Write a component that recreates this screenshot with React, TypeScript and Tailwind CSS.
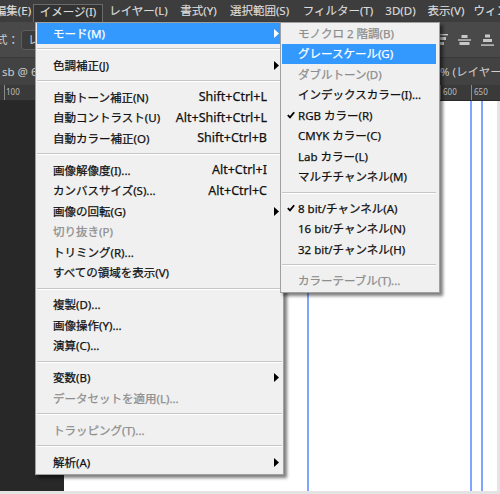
import React from 'react';

type Entry =
  | 'sep'
  | {
      label: string;
      shortcut?: string;
      sub?: boolean;
      disabled?: boolean;
      active?: boolean;
      checked?: boolean;
    };

const imageMenu: Entry[] = [
  { label: 'モード(M)', sub: true, active: true },
  'sep',
  { label: '色調補正(J)', sub: true },
  'sep',
  { label: '自動トーン補正(N)', shortcut: 'Shift+Ctrl+L' },
  { label: '自動コントラスト(U)', shortcut: 'Alt+Shift+Ctrl+L' },
  { label: '自動カラー補正(O)', shortcut: 'Shift+Ctrl+B' },
  'sep',
  { label: '画像解像度(I)...', shortcut: 'Alt+Ctrl+I' },
  { label: 'カンバスサイズ(S)...', shortcut: 'Alt+Ctrl+C' },
  { label: '画像の回転(G)', sub: true },
  { label: '切り抜き(P)', disabled: true },
  { label: 'トリミング(R)...' },
  { label: 'すべての領域を表示(V)' },
  'sep',
  { label: '複製(D)...' },
  { label: '画像操作(Y)...' },
  { label: '演算(C)...' },
  'sep',
  { label: '変数(B)', sub: true },
  { label: 'データセットを適用(L)...', disabled: true },
  'sep',
  { label: 'トラッピング(T)...', disabled: true },
  'sep',
  { label: '解析(A)', sub: true },
];

const modeMenu: Entry[] = [
  { label: 'モノクロ 2 階調(B)', disabled: true },
  { label: 'グレースケール(G)', active: true },
  { label: 'ダブルトーン(D)', disabled: true },
  { label: 'インデックスカラー(I)...' },
  { label: 'RGB カラー(R)', checked: true },
  { label: 'CMYK カラー(C)' },
  { label: 'Lab カラー(L)' },
  { label: 'マルチチャンネル(M)' },
  'sep',
  { label: '8 bit/チャンネル(A)', checked: true },
  { label: '16 bit/チャンネル(N)' },
  { label: '32 bit/チャンネル(H)' },
  'sep',
  { label: 'カラーテーブル(T)...', disabled: true },
];

const menuBar = [
  { label: '編集(E)', w: 'w-[40px]' },
  { label: 'イメージ(I)', w: 'w-[70px]', active: true },
  { label: 'レイヤー(L)', w: 'w-[71px]' },
  { label: '書式(Y)', w: 'w-[49px]' },
  { label: '選択範囲(S)', w: 'w-[73px]' },
  { label: 'フィルター(T)', w: 'w-[84px]' },
  { label: '3D(D)', w: 'w-[41px]' },
  { label: '表示(V)', w: 'w-[50px]' },
  { label: 'ウィンドウ(W)', w: 'w-[80px]' },
];

function Arrow({ white }: { white?: boolean }) {
  return (
    <svg width="5" height="9" viewBox="0 0 5 9" className="shrink-0">
      <polygon points="0,0 5,4.5 0,9" fill={white ? '#ffffff' : '#000000'} />
    </svg>
  );
}

function Check() {
  return (
    <svg width="8" height="8" viewBox="0 0 8 8" className="absolute left-[5px] top-1/2 -translate-y-1/2">
      <path d="M0.8 4.2 L3 6.4 L7.2 1.2" fill="none" stroke="#000" strokeWidth="1.8" />
    </svg>
  );
}

function Separator({ h }: { h: string }) {
  return (
    <div className={`${h} flex flex-col justify-center`}>
      <div className="h-px bg-[#c6c6c6]" />
      <div className="h-px bg-white" />
    </div>
  );
}

function MainMenu() {
  return (
    <div className="absolute left-[35px] top-[22px] z-10 w-[249px] border border-[#a0a0a0] bg-[#f0f0f0] px-px pb-px shadow-[3px_3px_3px_rgba(0,0,0,0.5)] [-webkit-text-stroke:0.25px]">
      {imageMenu.map((e, i) =>
        e === 'sep' ? (
          <Separator key={i} h="h-[11.5px]" />
        ) : (
          <div
            key={i}
            className={`flex h-[20.5px] items-center pl-[16px] pr-[3px] ${
              e.active ? 'bg-[#3399ff] text-white' : e.disabled ? 'text-[#8e8e8e]' : 'text-[#111]'
            }`}
          >
            <span className="flex-1 whitespace-nowrap">{e.label}</span>
            {e.shortcut && <span className="whitespace-nowrap text-[12.5px]">{e.shortcut}</span>}
            <span className="flex w-[12px] justify-end">{e.sub && <Arrow white={e.active} />}</span>
          </div>
        )
      )}
    </div>
  );
}

function ModeMenu() {
  return (
    <div className="absolute left-[280px] top-[22px] z-20 w-[160px] border border-[#a0a0a0] bg-[#f0f0f0] pb-px pl-px pr-[3px] shadow-[3px_3px_3px_rgba(0,0,0,0.5)] [-webkit-text-stroke:0.25px]">
      {modeMenu.map((e, i) =>
        e === 'sep' ? (
          <Separator key={i} h="h-[11px]" />
        ) : (
          <div
            key={i}
            className={`relative flex h-[20.5px] items-center pl-[16px] ${
              e.active ? 'bg-[#3399ff] text-white' : e.disabled ? 'text-[#8e8e8e]' : 'text-[#111]'
            }`}
          >
            {e.checked && <Check />}
            <span className="whitespace-nowrap">{e.label}</span>
          </div>
        )
      )}
    </div>
  );
}

function AlignIcon({ kind }: { kind: 'top' | 'mid' | 'bottom' }) {
  return (
    <svg width="13" height="12" viewBox="0 0 13 12" fill="#c8c8c8">
      {kind === 'top' && (
        <>
          <rect x="0" y="0" width="13" height="1.4" />
          <rect x="2" y="3" width="9" height="3" />
          <rect x="4" y="8" width="5" height="3" />
        </>
      )}
      {kind === 'mid' && (
        <>
          <rect x="3.5" y="1" width="6" height="3" />
          <rect x="0" y="5.3" width="13" height="1.4" />
          <rect x="1.5" y="8" width="10" height="3" />
        </>
      )}
      {kind === 'bottom' && (
        <>
          <rect x="4" y="0.5" width="5" height="3" />
          <rect x="2" y="5" width="9" height="3" />
          <rect x="0" y="10.4" width="13" height="1.4" />
        </>
      )}
    </svg>
  );
}

export default function App() {
  return (
    <div className="relative h-[494px] w-[500px] overflow-hidden bg-[#282828] font-['Noto_Sans','Noto_Sans_CJK_JP',sans-serif] text-[11.5px] leading-none">
      {/* menu bar */}
      <div className="flex h-[22px] items-end overflow-hidden bg-[#3d3d3d] text-[#dcdcdc] [-webkit-text-stroke:0.15px]">
        <div className="ml-[-7px] flex h-[18px] shrink-0">
          {menuBar.map((m) => (
            <div
              key={m.label}
              className={`flex ${m.w} shrink-0 items-center justify-center whitespace-nowrap pb-[4px] ${
                m.active ? 'border border-b-0 border-[#6b6b6b] bg-[#333333]' : ''
              }`}
            >
              {m.label}
            </div>
          ))}
        </div>
      </div>

      {/* options bar */}
      <div className="flex h-[35px] items-center bg-[#494949] text-[#d0d0d0]">
        <span className="ml-[-4px] whitespace-nowrap">式：</span>
        <div className="ml-[2px] flex h-[20px] w-[90px] items-center rounded-[3px] border border-[#5e5e5e] bg-[#3b3b3b] px-[6px] text-[#cfcfcf]">
          レイヤー
        </div>
        <div className="ml-auto flex items-center gap-[10px] pr-[6px]">
          <AlignIcon kind="top" />
          <AlignIcon kind="mid" />
          <AlignIcon kind="bottom" />
        </div>
      </div>

      {/* document tab */}
      <div className="flex h-[28px] items-center overflow-hidden border-t border-[#3a3a3a] bg-[#424242] text-[#cfcfcf]">
        <span className="w-[440px] shrink-0 whitespace-nowrap pl-[2px]">sb @ 66.7% (レイヤー 1, RGB/8) *</span>
        <span className="whitespace-nowrap">% (レイヤー 1, RGB/8) *</span>
      </div>

      {/* ruler */}
      <div className="relative h-[16px] border-b border-[#2a2a2a] bg-[#3a3a3a] text-[8px] text-[#bdbdbd]">
        <div className="absolute left-[4px] top-0 h-full w-px bg-[#8a8a8a]" />
        <span className="absolute left-[6px] top-[3px]">100</span>
        <div className="absolute left-[440px] top-0 h-full w-px bg-[#8a8a8a]" />
        <span className="absolute left-[443px] top-[3px]">600</span>
        <div className="absolute left-[471px] top-0 h-full w-px bg-[#8a8a8a]" />
        <span className="absolute left-[474px] top-[3px]">650</span>
      </div>

      {/* work area */}
      <div className="flex h-[390px]">
        <div className="w-[64px] shrink-0 bg-[#282828]" />
        <div className="relative flex-1 bg-white">
          <div className="absolute left-[243px] top-0 h-full w-[1.5px] bg-[#7fa6ff]" />
          <div className="absolute left-[406px] top-0 h-full w-[1.5px] bg-[#7fa6ff]" />
          <div className="absolute left-[417px] top-0 h-full w-[1.5px] bg-[#7fa6ff]" />
        </div>
        <div className="w-[3px] shrink-0 bg-[#e4e4e4]" />
      </div>
      <div className="h-[3px] bg-[#e4e4e4]" />

      <MainMenu />
      <ModeMenu />
    </div>
  );
}
